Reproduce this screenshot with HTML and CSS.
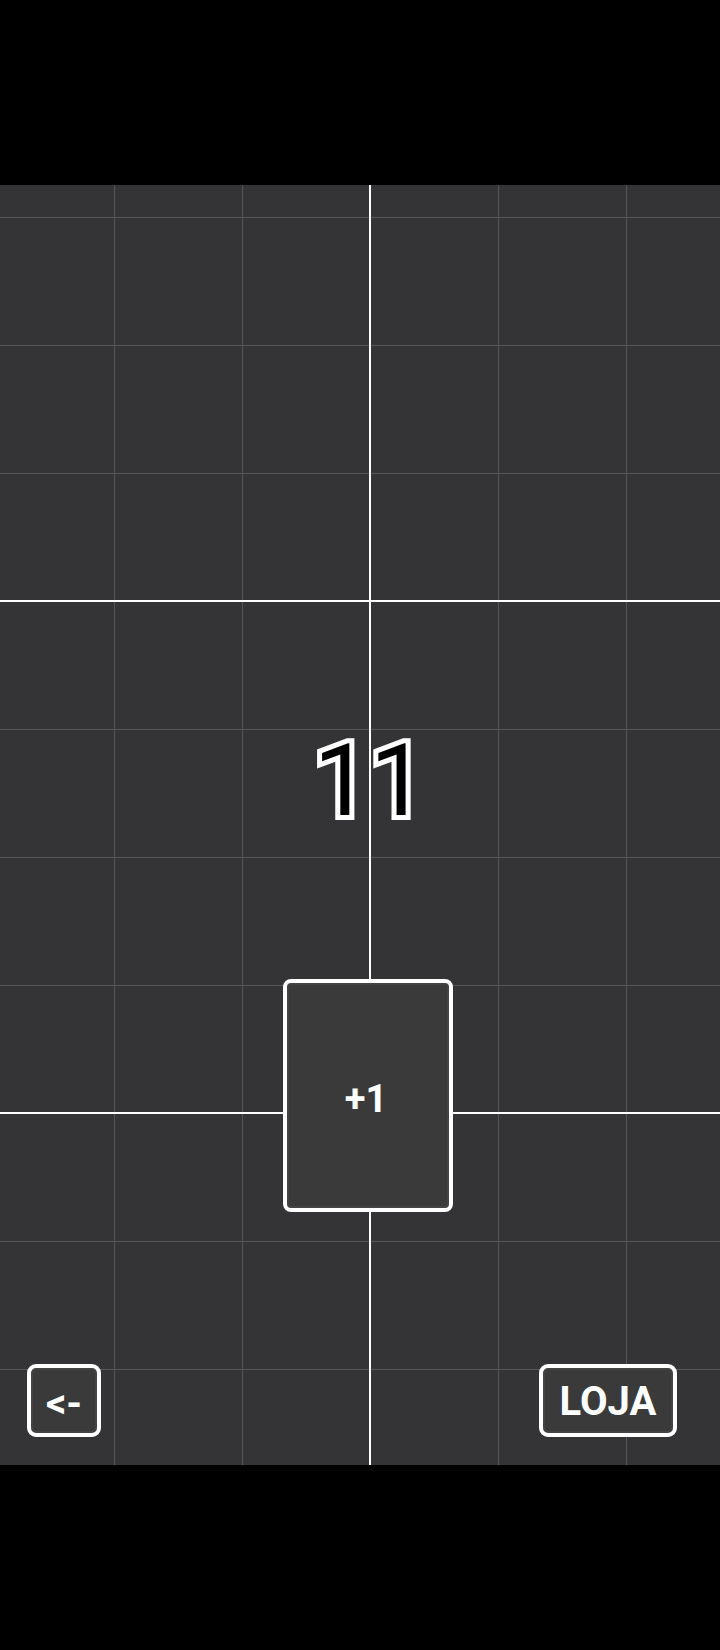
FILE: index.html
```html
<!DOCTYPE html>
<html lang="pt">
<head>
<meta charset="utf-8">
<title>Clicker</title>
<link rel="stylesheet" href="styles.css">
</head>
<body>
<div class="screen">
  <div class="bar"></div>
  <main class="game">
    <div class="score">11</div>
    <div class="card-row"><div class="card">+1</div></div>
    <div class="controls">
      <div class="btn back">&lt;-</div>
      <div class="btn shop">LOJA</div>
    </div>
  </main>
  <div class="bar"></div>
</div>
</body>
</html>
```
FILE: styles.css
```css
html, body {
  margin: 0;
  padding: 0;
  background: #000;
}
.screen {
  width: 720px;
  height: 1650px;
  display: flex;
  flex-direction: column;
  font-family: Roboto, "Liberation Sans", sans-serif;
}
.bar {
  height: 185px;
  background: #000;
  flex: none;
}
.game {
  height: 1280px;
  flex: none;
  display: flex;
  flex-direction: column;
  background-color: #343436;
  background-image:
    linear-gradient(to right, transparent 369px, #ffffff 369px, #ffffff 371px, transparent 371px),
    linear-gradient(to bottom, transparent 415px, #ffffff 415px, #ffffff 417px, transparent 417px, transparent 927px, #ffffff 927px, #ffffff 929px, transparent 929px),
    linear-gradient(to right, transparent 114px, #575759 114px, #575759 115px, transparent 115px),
    linear-gradient(to bottom, transparent 32px, #575759 32px, #575759 33px, transparent 33px);
  background-size: 100% 100%, 100% 100%, 128px 100%, 100% 128px;
  background-repeat: no-repeat, no-repeat, repeat, repeat;
}
.score {
  margin-top: 546px;
  padding-left: 20px;
  text-align: center;
  font-size: 100px;
  line-height: 100px;
  font-weight: 400;
  color: #000;
  -webkit-text-stroke: 10px #fff;
  paint-order: stroke fill;
}
.card-row {
  margin-top: 148px;
  display: flex;
  justify-content: center;
  padding-left: 16px;
}
.card {
  box-sizing: border-box;
  width: 170px;
  height: 233px;
  border: 4px solid #fff;
  border-radius: 8px;
  background: #3a3a3a;
  box-shadow: inset 0 0 1px 2px #454545;
  display: flex;
  align-items: center;
  justify-content: center;
  color: #fff;
  font-weight: 700;
  font-size: 38px;
  padding: 7px 4px 0 0;
}
.controls {
  margin-top: auto;
  padding: 0 43px 28px 27px;
  display: flex;
  justify-content: space-between;
}
.btn {
  box-sizing: border-box;
  height: 73px;
  border: 4px solid #fff;
  border-radius: 9px;
  background: #3a3a3a;
  box-shadow: inset 0 0 1px 2px #454545;
  display: flex;
  align-items: center;
  justify-content: center;
  color: #fff;
  font-weight: 700;
  font-size: 40px;
}
.back {
  width: 74px;
  padding-top: 6px;
}
.shop {
  width: 138px;
  padding-top: 2px;
}
```
